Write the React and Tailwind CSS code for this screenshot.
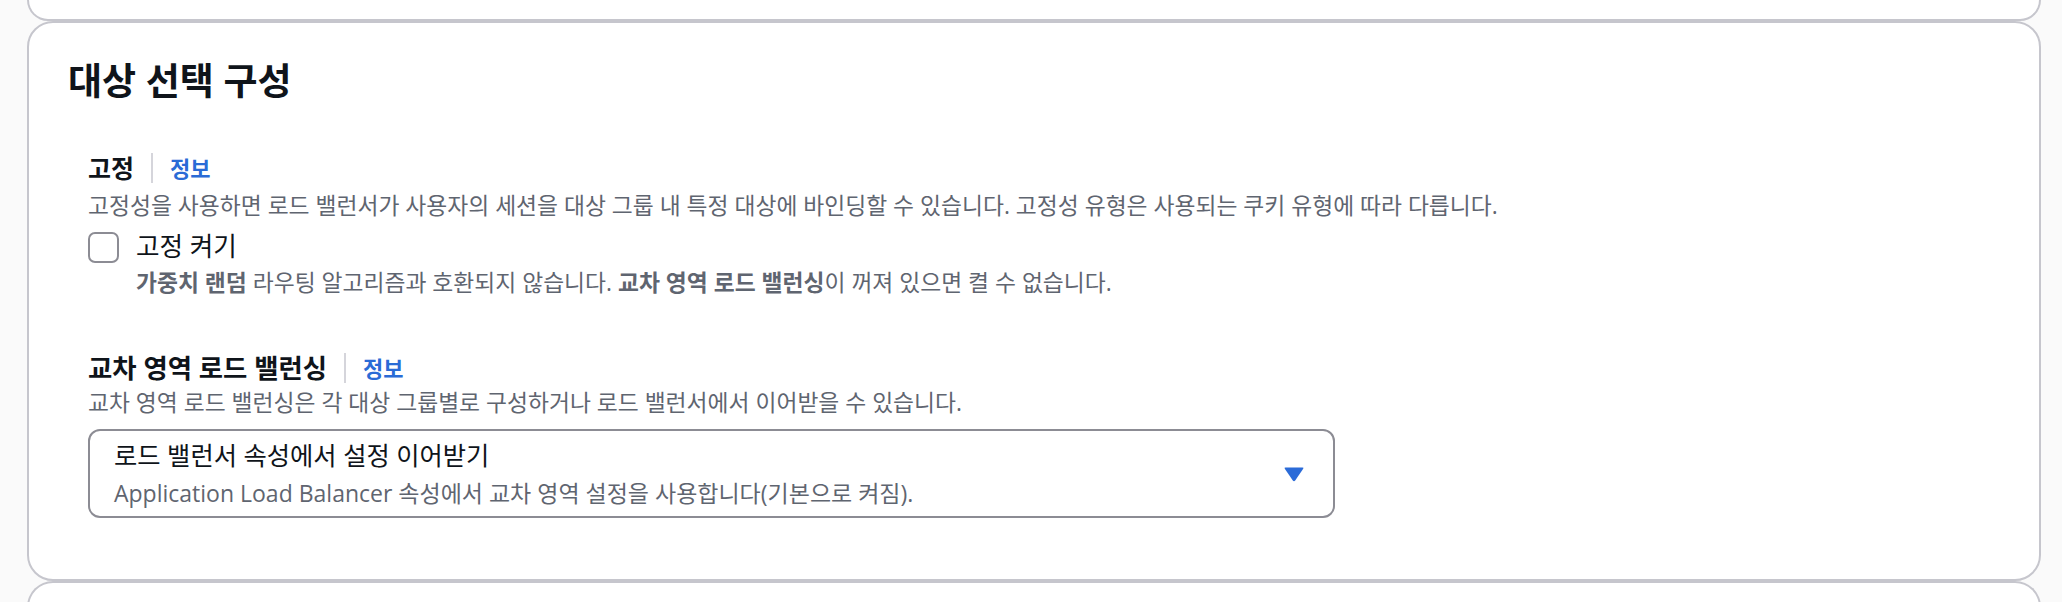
import React from "react";

const font = "font-['Open_Sans','Noto_Sans_CJK_KR',sans-serif]";

function InfoLabel({ label, size }) {
	return (
		<div className="flex items-center h-[30px]">
			<span className={`${size} leading-[30px] font-bold text-[#0f141a]`}>
				{label}
			</span>
			<span className="mx-[17px] w-[2px] h-[30px] bg-[#d5d5db]" />
			<a className="text-[22px] leading-[30px] font-bold text-[#2a6bd6]">
				정보
			</a>
		</div>
	);
}

function Description({ children }) {
	return (
		<p className="text-[22.8px] leading-[30px] text-[#5f6570]">{children}</p>
	);
}

function Checkbox({ label }) {
	return (
		<label className="flex items-center h-[32px] gap-[17px]">
			<span className="w-[31px] h-[31px] rounded-[7px] border-2 border-[#8c8c94] bg-white" />
			<span className="text-[25.6px] leading-[32px] text-[#0f141a]">{label}</span>
		</label>
	);
}

function CaretDown() {
	return (
		<svg width="22" height="16" viewBox="0 0 22 16">
			<path
				d="M2.5 1.5 H19.5 Q21 1.5 20.2 2.8 L12.2 14.6 Q11 16 9.8 14.6 L1.8 2.8 Q1 1.5 2.5 1.5 Z"
				fill="#2b6bd8"
			/>
		</svg>
	);
}

function Select() {
	return (
		<div className="mt-[11px] w-[1247px] h-[89px] rounded-[12px] border-2 border-[#8c8c94] bg-white flex items-center justify-between pl-[24px] pr-[28px]">
			<div className="flex flex-col gap-[7px]">
				<span className="text-[25.3px] leading-[32px] text-[#0f141a]">
					로드 밸런서 속성에서 설정 이어받기
				</span>
				<span className="text-[23px] leading-[30px] text-[#5f6570]">
					Application Load Balancer 속성에서 교차 영역 설정을 사용합니다(기본으로 켜짐).
				</span>
			</div>
			<CaretDown />
		</div>
	);
}

export default function App() {
	return (
		<div className={`${font} w-full h-[602px] overflow-hidden bg-[#fafafa] pl-[27px] pr-[21px]`}>
			<div className="h-[21px] bg-white border-2 border-t-0 border-[#c6c6cd] rounded-b-[26px]" />
			<section className="h-[560px] bg-white border-2 border-[#c6c6cd] rounded-[26px] pt-[36px] pl-[39px]">
				<h2 className="text-[37px] leading-[44px] font-bold text-[#0f141a]">
					대상 선택 구성
				</h2>
				<div className="pl-[20px] mt-[50px]">
					<InfoLabel label="고정" size="text-[25px]" />
					<div className="mt-[8px]">
						<Description>
							고정성을 사용하면 로드 밸런서가 사용자의 세션을 대상 그룹 내 특정 대상에 바인딩할 수 있습니다. 고정성 유형은 사용되는 쿠키 유형에 따라 다릅니다.
						</Description>
					</div>
					<div className="mt-[10px]">
						<Checkbox label="고정 켜기" />
					</div>
					<p className="mt-[5px] pl-[48px] text-[22.8px] leading-[30px] text-[#5f6570]">
						<b>가중치 랜덤</b> 라우팅 알고리즘과 호환되지 않습니다.{" "}
						<b>교차 영역 로드 밸런싱</b>이 꺼져 있으면 켤 수 없습니다.
					</p>
					<div className="mt-[55px]">
						<InfoLabel label="교차 영역 로드 밸런싱" size="text-[26.4px]" />
					</div>
					<div className="mt-[5px]">
						<Description>
							교차 영역 로드 밸런싱은 각 대상 그룹별로 구성하거나 로드 밸런서에서 이어받을 수 있습니다.
						</Description>
					</div>
					<Select />
				</div>
			</section>
			<div className="h-[40px] bg-white border-2 border-b-0 border-[#c6c6cd] rounded-t-[26px]" />
		</div>
	);
}
